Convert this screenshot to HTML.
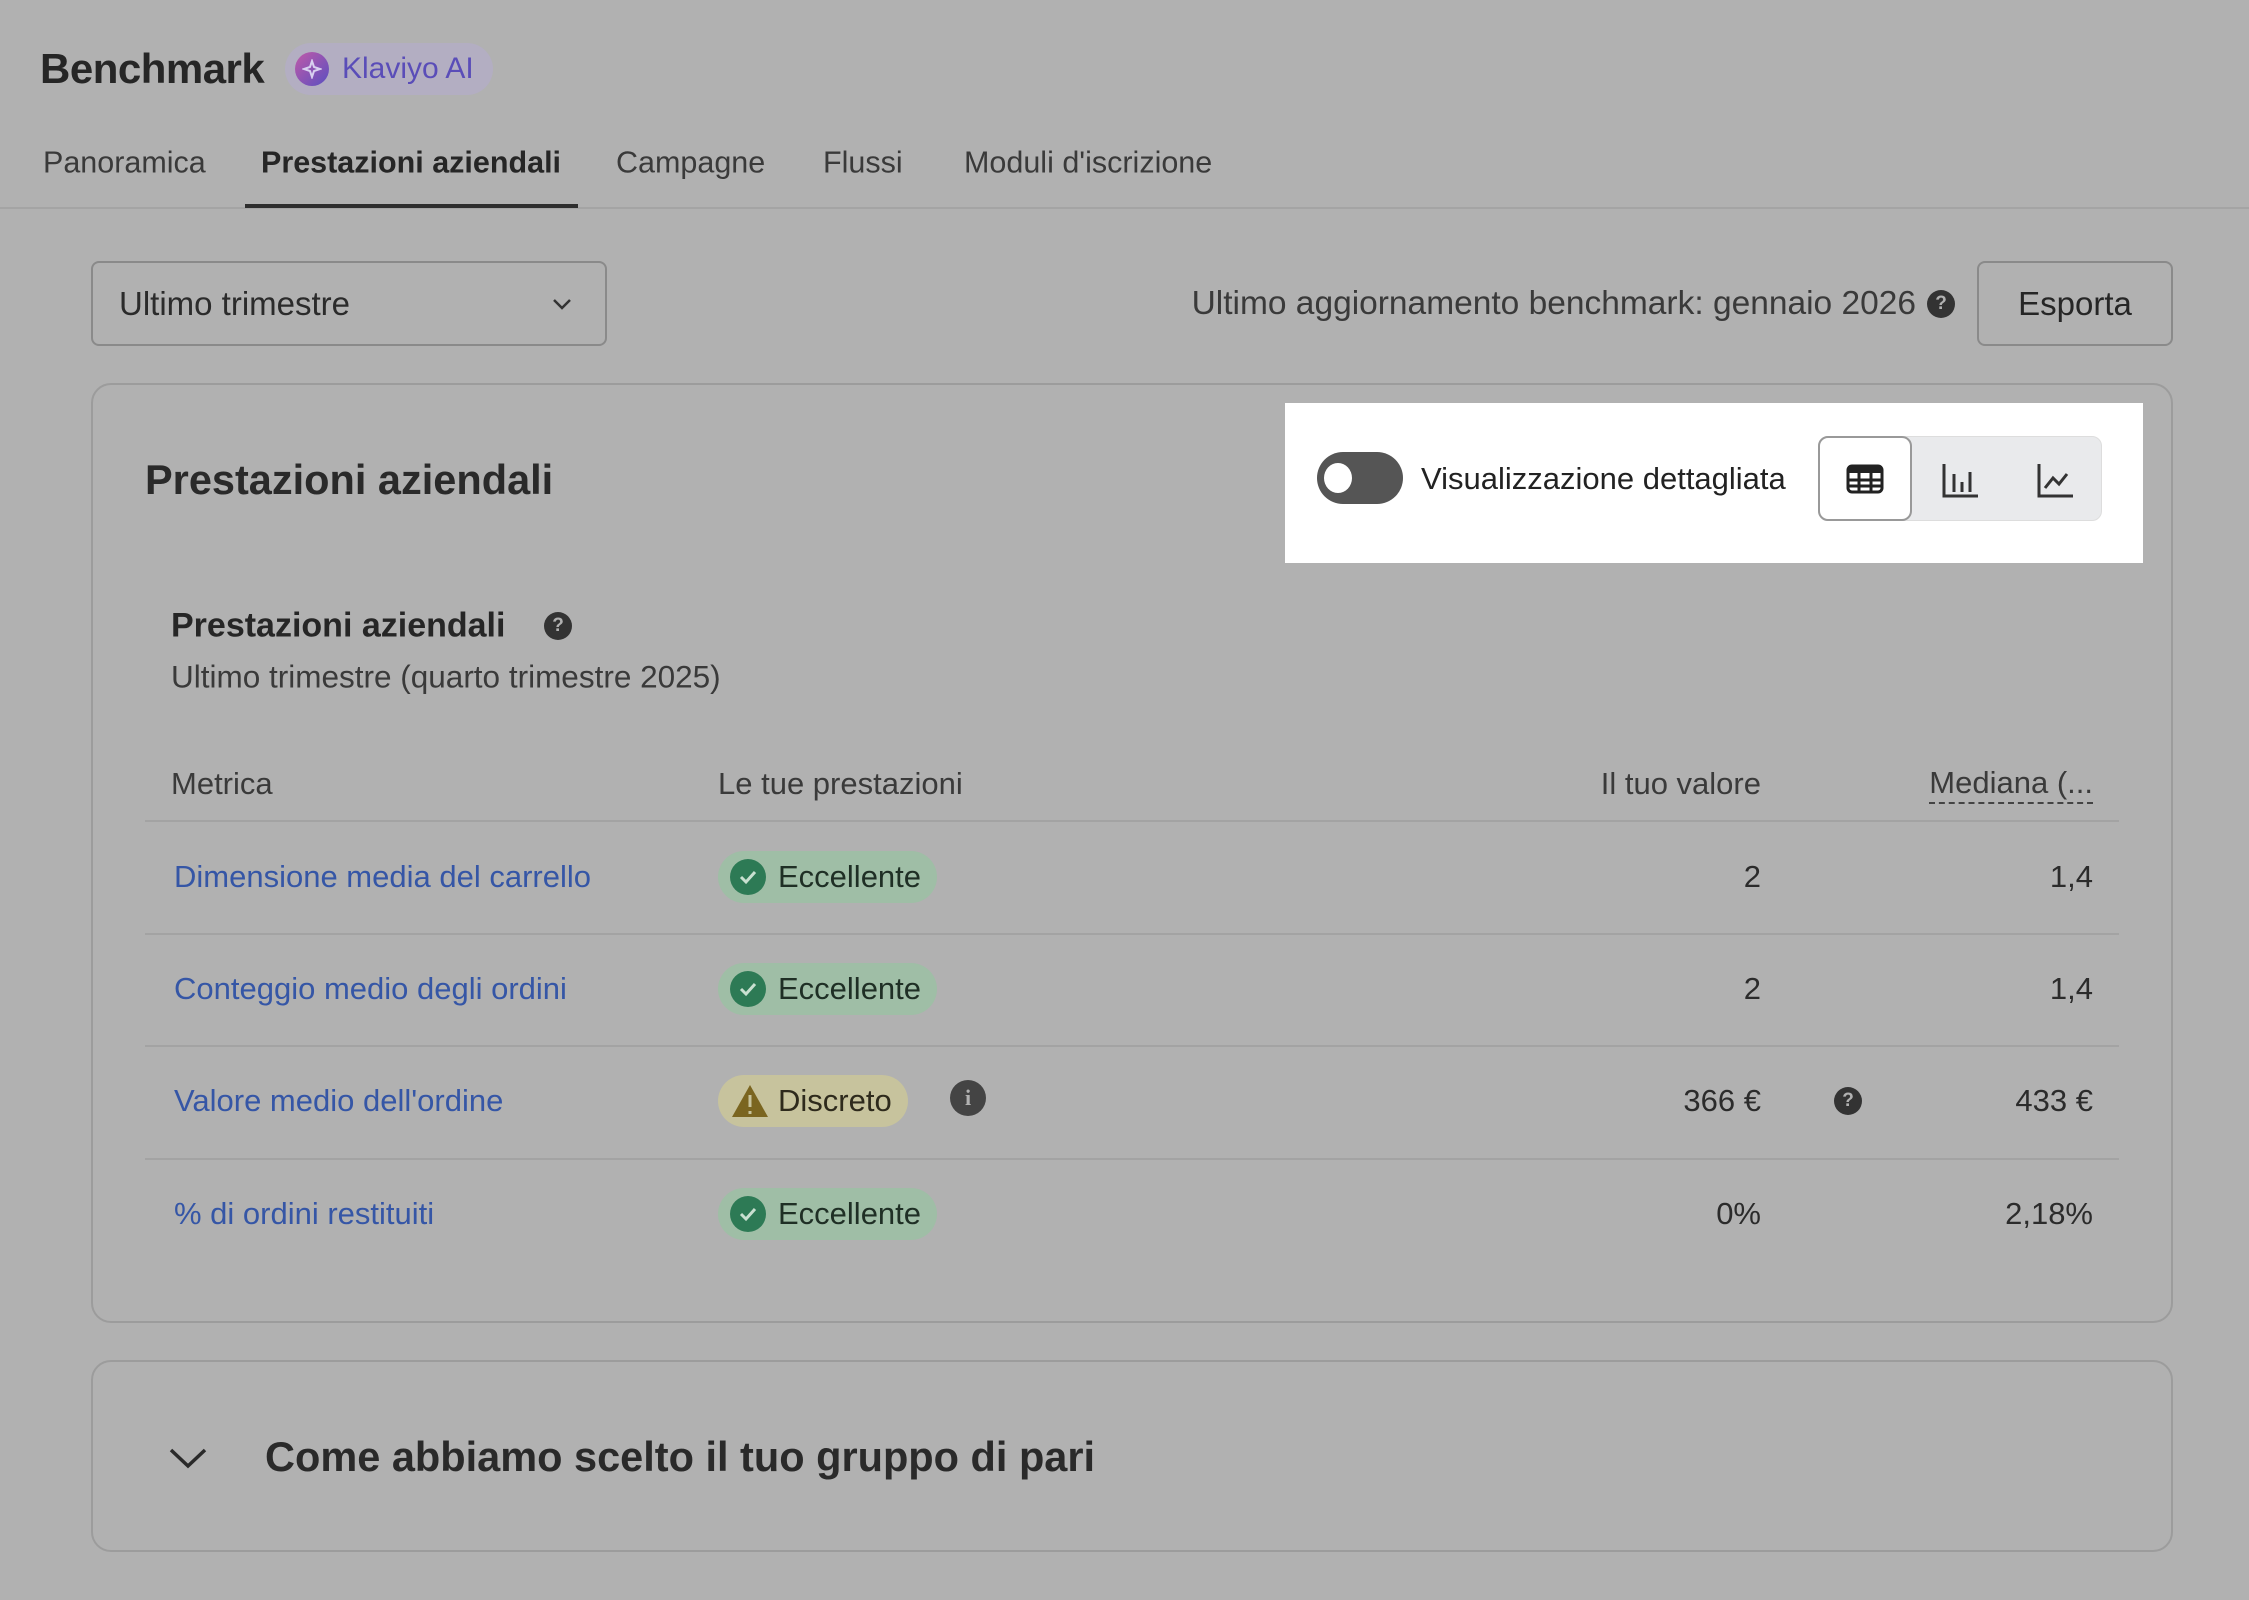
<!DOCTYPE html>
<html><head><meta charset="utf-8"><style>
*{box-sizing:border-box;margin:0;padding:0}
body{width:2249px;height:1600px;background:#b1b1b1;font-family:"Liberation Sans",sans-serif;color:#2b2b2b;position:relative;overflow:hidden}
.a{position:absolute;white-space:nowrap}
.mid{transform:translateY(-50%)}
.r{text-align:right}
.tab{font-size:30.5px;color:#3a3a3a}
.link{color:#3556a6;font-size:31px}
.badge{position:absolute;height:52px;border-radius:26px;display:flex;align-items:center;padding:0 16px 0 12px;font-size:31px;transform:translateY(-50%)}
.g{background:#9fbea6;color:#1f2f25}
.chk{width:36px;height:36px;border-radius:50%;background:#2d7a55;margin-right:12px;display:flex;align-items:center;justify-content:center}
.line{position:absolute;height:2px;background:#a3a3a3;left:145px;width:1974px}
.dot{position:absolute;border-radius:50%;background:#333;color:#b1b1b1;font-weight:bold;display:flex;align-items:center;justify-content:center}
.v{font-size:31px}
</style></head><body>
<div class="a mid" style="left:40px;top:69px;font-size:42px;font-weight:bold;color:#262626;letter-spacing:-0.5px">Benchmark</div>
<div class="a" style="left:285px;top:43px;width:208px;height:52px;border-radius:26px;background:#b3aec2"></div>
<div class="a" style="left:295px;top:52px;width:34px;height:34px;border-radius:50%;background:linear-gradient(135deg,#c05aa8,#5a4fc0)"></div>
<svg class="a" style="left:302px;top:59px" width="20" height="20" viewBox="0 0 20 20"><path d="M10 2 L12 8 L18 10 L12 12 L10 18 L8 12 L2 10 L8 8Z" fill="none" stroke="#d8d0f0" stroke-width="2"/></svg>
<div class="a mid" style="left:342px;top:69px;font-size:30px;color:#5a4db8">Klaviyo AI</div>

<div class="a mid tab" style="left:43px;top:163px">Panoramica</div>
<div class="a mid tab" style="left:261px;top:163px;font-weight:bold;color:#262626">Prestazioni aziendali</div>
<div class="a mid tab" style="left:616px;top:163px">Campagne</div>
<div class="a mid tab" style="left:823px;top:163px">Flussi</div>
<div class="a mid tab" style="left:964px;top:163px">Moduli d'iscrizione</div>
<div class="a" style="left:0;top:207px;width:2249px;height:2px;background:#a4a4a4"></div>
<div class="a" style="left:245px;top:204px;width:333px;height:4px;background:#2e2e2e"></div>

<div class="a" style="left:91px;top:261px;width:516px;height:85px;border:2px solid #8a8a8a;border-radius:8px"></div>
<div class="a mid" style="left:119px;top:304px;font-size:33px">Ultimo trimestre</div>
<svg class="a" style="left:551px;top:296px" width="22" height="16" viewBox="0 0 22 16"><path d="M3 4 L11 12 L19 4" fill="none" stroke="#333" stroke-width="2.5"/></svg>
<div class="a mid r" style="right:333px;top:304px;font-size:33.5px;color:#3a3a3a">Ultimo aggiornamento benchmark: gennaio 2026</div>
<div class="dot" style="left:1927px;top:290px;width:28px;height:28px;font-size:19px">?</div>
<div class="a" style="left:1977px;top:261px;width:196px;height:85px;border:2px solid #8a8a8a;border-radius:8px;font-size:33px;display:flex;align-items:center;justify-content:center;color:#262626">Esporta</div>

<div class="a" style="left:91px;top:383px;width:2082px;height:940px;border:2px solid #9c9c9c;border-radius:20px"></div>
<div class="a mid" style="left:145px;top:480px;font-size:41.5px;font-weight:bold;color:#2a2a2a">Prestazioni aziendali</div>

<div class="a" style="left:1285px;top:403px;width:858px;height:160px;background:#fff"></div>
<div class="a" style="left:1317px;top:452px;width:86px;height:52px;border-radius:26px;background:#555"></div>
<div class="a" style="left:1324px;top:463px;width:28px;height:30px;border-radius:50%;background:#fff"></div>
<div class="a mid" style="left:1421px;top:479px;font-size:31px;color:#222">Visualizzazione dettagliata</div>
<div class="a" style="left:1818px;top:436px;width:284px;height:85px;border-radius:10px;background:#e9eaec;border:1px solid #ddd"></div>
<div class="a" style="left:1818px;top:436px;width:94px;height:85px;border-radius:10px;background:#fff;border:2px solid #999"></div>
<svg class="a" style="left:1845px;top:463px" width="40" height="32" viewBox="0 0 40 32"><rect x="3" y="3" width="34" height="26" rx="4" fill="none" stroke="#222" stroke-width="3"/><rect x="3" y="3" width="34" height="7" fill="#222"/><path d="M3 17H37M3 23H37M14 10V29M26 10V29" stroke="#222" stroke-width="3"/></svg>
<svg class="a" style="left:1940px;top:460px" width="40" height="40" viewBox="0 0 40 40"><path d="M4 4V36H38M14 14V32M22 22V32M30 12V32" fill="none" stroke="#333" stroke-width="3"/></svg>
<svg class="a" style="left:2035px;top:460px" width="40" height="40" viewBox="0 0 40 40"><path d="M4 4V36H38M10 28L18 18L24 24L32 14" fill="none" stroke="#333" stroke-width="3"/></svg>

<div class="a mid" style="left:171px;top:626px;font-size:34px;font-weight:bold;color:#262626">Prestazioni aziendali</div>
<div class="dot" style="left:544px;top:612px;width:28px;height:28px;font-size:19px">?</div>
<div class="a mid" style="left:171px;top:677px;font-size:31.5px;color:#3a3a3a">Ultimo trimestre (quarto trimestre 2025)</div>

<div class="a mid v" style="left:171px;top:784px;color:#3a3a3a">Metrica</div>
<div class="a mid v" style="left:718px;top:784px;color:#3a3a3a">Le tue prestazioni</div>
<div class="a mid r v" style="right:488px;top:784px;color:#3a3a3a">Il tuo valore</div>
<div class="a mid r v" style="right:156px;top:784px;color:#3a3a3a;border-bottom:2px dashed #444;line-height:38px">Mediana (...</div>
<div class="line" style="top:820px"></div>
<div class="line" style="top:933px"></div>
<div class="line" style="top:1045px"></div>
<div class="line" style="top:1158px"></div>

<div class="a mid link" style="left:174px;top:877px">Dimensione media del carrello</div>
<div class="a mid link" style="left:174px;top:989px">Conteggio medio degli ordini</div>
<div class="a mid link" style="left:174px;top:1101px">Valore medio dell'ordine</div>
<div class="a mid link" style="left:174px;top:1214px">% di ordini restituiti</div>

<div class="badge g" style="left:718px;top:877px"><span class="chk"><svg width="20" height="16" viewBox="0 0 20 16"><path d="M3 8L8 13L17 3" fill="none" stroke="#c8e0d0" stroke-width="3"/></svg></span>Eccellente</div>
<div class="badge g" style="left:718px;top:989px"><span class="chk"><svg width="20" height="16" viewBox="0 0 20 16"><path d="M3 8L8 13L17 3" fill="none" stroke="#c8e0d0" stroke-width="3"/></svg></span>Eccellente</div>
<div class="badge" style="left:718px;top:1101px;background:#c7c39d;color:#2e2a1c"><svg width="40" height="36" viewBox="0 0 40 36" style="margin-right:8px"><path d="M20 2L38 34H2Z" fill="#7a6520"/><path d="M20 12V24M20 28V31" stroke="#c7c39d" stroke-width="3"/></svg>Discreto</div>
<div class="badge g" style="left:718px;top:1214px"><span class="chk"><svg width="20" height="16" viewBox="0 0 20 16"><path d="M3 8L8 13L17 3" fill="none" stroke="#c8e0d0" stroke-width="3"/></svg></span>Eccellente</div>
<div class="dot" style="left:950px;top:1080px;width:36px;height:36px;font-size:22px;background:#444;font-family:'Liberation Serif',serif">i</div>
<div class="dot" style="left:1834px;top:1087px;width:28px;height:28px;font-size:19px">?</div>

<div class="a mid r v" style="right:488px;top:877px">2</div>
<div class="a mid r v" style="right:488px;top:989px">2</div>
<div class="a mid r v" style="right:488px;top:1101px">366 €</div>
<div class="a mid r v" style="right:488px;top:1214px">0%</div>
<div class="a mid r v" style="right:156px;top:877px">1,4</div>
<div class="a mid r v" style="right:156px;top:989px">1,4</div>
<div class="a mid r v" style="right:156px;top:1101px">433 €</div>
<div class="a mid r v" style="right:156px;top:1214px">2,18%</div>

<div class="a" style="left:91px;top:1360px;width:2082px;height:192px;border:2px solid #9c9c9c;border-radius:20px"></div>
<svg class="a" style="left:168px;top:1445px" width="40" height="26" viewBox="0 0 40 26"><path d="M3 5L20 21L37 5" fill="none" stroke="#2a2a2a" stroke-width="3.5"/></svg>
<div class="a mid" style="left:265px;top:1457px;font-size:41.5px;font-weight:bold;color:#2a2a2a">Come abbiamo scelto il tuo gruppo di pari</div>
</body></html>
